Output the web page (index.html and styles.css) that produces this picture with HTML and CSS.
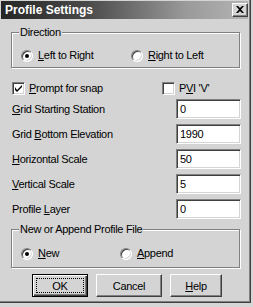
FILE: index.html
```html
<!DOCTYPE html>
<html>
<head>
<meta charset="utf-8">
<link rel="stylesheet" href="styles.css">
</head>
<body>
<div class="window">
  <div class="titlebar">
    <span class="title">Profile Settings</span>
    <span class="close"><svg width="8" height="7" viewBox="0 0 8 7"><path d="M0 0h2l2 2 2-2h2L5 3.5 8 7H6L4 5 2 7H0l3-3.5z" fill="#000"/></svg></span>
  </div>
  <div class="client">
    <fieldset class="group group-dir">
      <legend>Direction</legend>
      <div class="radios">
        <label class="opt"><span class="radio on"></span><span><u>L</u>eft to Right</span></label>
        <label class="opt"><span class="radio"></span><span><u>R</u>ight to Left</span></label>
      </div>
    </fieldset>
    <div class="checks">
      <label class="opt"><span class="check on"><svg width="7" height="7" viewBox="0 0 7 7"><path d="M0 2v3l2 2 5-5V0L2 5z" fill="#000"/></svg></span><span><u>P</u>rompt for snap</span></label>
      <label class="opt"><span class="check"></span><span>P<u>V</u>I 'V'</span></label>
    </div>
    <div class="fields">
      <div class="field"><span><u>G</u>rid Starting Station</span><span class="input">0</span></div>
      <div class="field"><span>Grid <u>B</u>ottom Elevation</span><span class="input">1990</span></div>
      <div class="field"><span><u>H</u>orizontal Scale</span><span class="input">50</span></div>
      <div class="field"><span><u>V</u>ertical Scale</span><span class="input">5</span></div>
      <div class="field"><span>Profile <u>L</u>ayer</span><span class="input">0</span></div>
    </div>
    <fieldset class="group group-file">
      <legend>New or Append Profile File</legend>
      <div class="radios">
        <label class="opt"><span class="radio on"></span><span><u>N</u>ew</span></label>
        <label class="opt"><span class="radio"></span><span><u>A</u>ppend</span></label>
      </div>
    </fieldset>
    <div class="buttons">
      <span class="btn btn-default btn-ok"><span class="focus">OK</span></span>
      <span class="btn btn-cancel">Cancel</span>
      <span class="btn btn-help"><u>H</u>elp</span>
    </div>
  </div>
</div>
</body>
</html>
```

FILE: styles.css
```css
html, body {
  margin: 0;
  padding: 0;
}
body {
  font-family: "Liberation Sans", Arial, sans-serif;
  font-size: 11px;
  letter-spacing: -0.3px;
  color: #000;
  background: #d6d6d6;
  overflow: hidden;
}
u {
  text-decoration: underline;
  text-underline-offset: 1px;
}
.window {
  width: 253px;
  height: 305px;
  margin: -2px 0 0 -2px;
  box-sizing: border-box;
  background: #d4d4d4;
  border: 1px solid;
  border-color: #d4d4d4 #404040 #404040 #d4d4d4;
  box-shadow: inset 1px 1px #fff, inset -1px -1px #808080;
  padding: 2px;
  display: flex;
  flex-direction: column;
}
.titlebar {
  height: 18px;
  flex: none;
  display: flex;
  align-items: center;
  justify-content: space-between;
  padding: 0 0 0 4px;
  background: linear-gradient(to right, #262626 0%, #4a4a4a 35%, #9a9a9a 75%, #b4b4b4 100%);
}
.title {
  color: #fff;
  font-weight: bold;
  font-size: 12px;
  letter-spacing: 0;
}
.close {
  width: 16px;
  height: 14px;
  box-sizing: border-box;
  background: #d4d4d4;
  border: 1px solid;
  border-color: #fff #404040 #404040 #fff;
  box-shadow: inset -1px -1px #808080;
  display: flex;
  align-items: center;
  justify-content: center;
  padding-bottom: 1px;
}
.client {
  flex: 1;
  padding: 0 7px 0 10px;
  display: flex;
  flex-direction: column;
}
.group {
  margin: 0;
  padding: 0;
  min-width: 0;
  border: 1px solid #808080;
  box-shadow: inset 1px 1px #fff, 1px 1px #fff;
  width: 229px;
  box-sizing: border-box;
  flex: none;
}
.group legend {
  margin-left: 7px;
  padding: 0 1px;
  line-height: 13px;
  background: #d4d4d4;
}
.group-dir {
  margin-top: 7px;
  height: 42px;
}
.group-file {
  margin-top: 4px;
  height: 45px;
}
.radios {
  display: grid;
  grid-template-columns: 110px auto;
  padding-left: 9px;
  margin-top: 10px;
}
.group-file .radios {
  grid-template-columns: 99px auto;
  margin-top: 11px;
}
.opt {
  display: flex;
  align-items: center;
  gap: 5px;
  line-height: 13px;
}
.radio {
  width: 12px;
  height: 12px;
  flex: none;
  box-sizing: border-box;
  border-radius: 50%;
  border: 1px solid;
  border-color: #808080 #fff #fff #808080;
  box-shadow: inset 1px 1px #404040, inset -1px -1px #d4d4d4;
  background: #fff;
  display: flex;
  align-items: center;
  justify-content: center;
}
.radio.on::after {
  content: "";
  width: 4px;
  height: 4px;
  border-radius: 50%;
  background: #000;
}
.checks {
  display: grid;
  grid-template-columns: 150px auto;
  margin-top: 14px;
  padding-left: 1px;
}
.checks .opt {
  gap: 4px;
}
.check {
  width: 13px;
  height: 13px;
  flex: none;
  box-sizing: border-box;
  border: 1px solid;
  border-color: #808080 #fff #fff #808080;
  box-shadow: inset 1px 1px #404040, inset -1px -1px #d4d4d4;
  background: #fff;
  display: flex;
  align-items: center;
  justify-content: center;
}
.fields {
  margin-top: 4px;
  display: flex;
  flex-direction: column;
  gap: 5px;
}
.field {
  display: flex;
  align-items: center;
  justify-content: space-between;
  padding-left: 1px;
  height: 20px;
}
.input {
  width: 65px;
  height: 20px;
  box-sizing: border-box;
  background: #fff;
  border: 1px solid;
  border-color: #808080 #fff #fff #808080;
  box-shadow: inset 1px 1px #404040, inset -1px -1px #d4d4d4;
  padding: 3px 0 0 3px;
  line-height: 13px;
}
.buttons {
  display: flex;
  gap: 8px;
  margin-top: 6px;
  padding-left: 21px;
}
.btn {
  height: 23px;
  box-sizing: border-box;
  display: flex;
  align-items: center;
  justify-content: center;
  background: #d4d4d4;
  border: 1px solid;
  border-color: #fff #404040 #404040 #fff;
  box-shadow: inset -1px -1px #808080;
}
.btn-ok {
  width: 56px;
  border: 1px solid #000;
  box-shadow: inset 1px 1px #fff, inset -1px -1px #404040, inset -2px -2px #808080;
  padding: 3px;
}
.focus {
  flex: 1;
  align-self: stretch;
  display: flex;
  align-items: center;
  justify-content: center;
  border: 1px dotted #000;
}
.btn-cancel {
  width: 66px;
}
.btn-help {
  width: 52px;
}
```
